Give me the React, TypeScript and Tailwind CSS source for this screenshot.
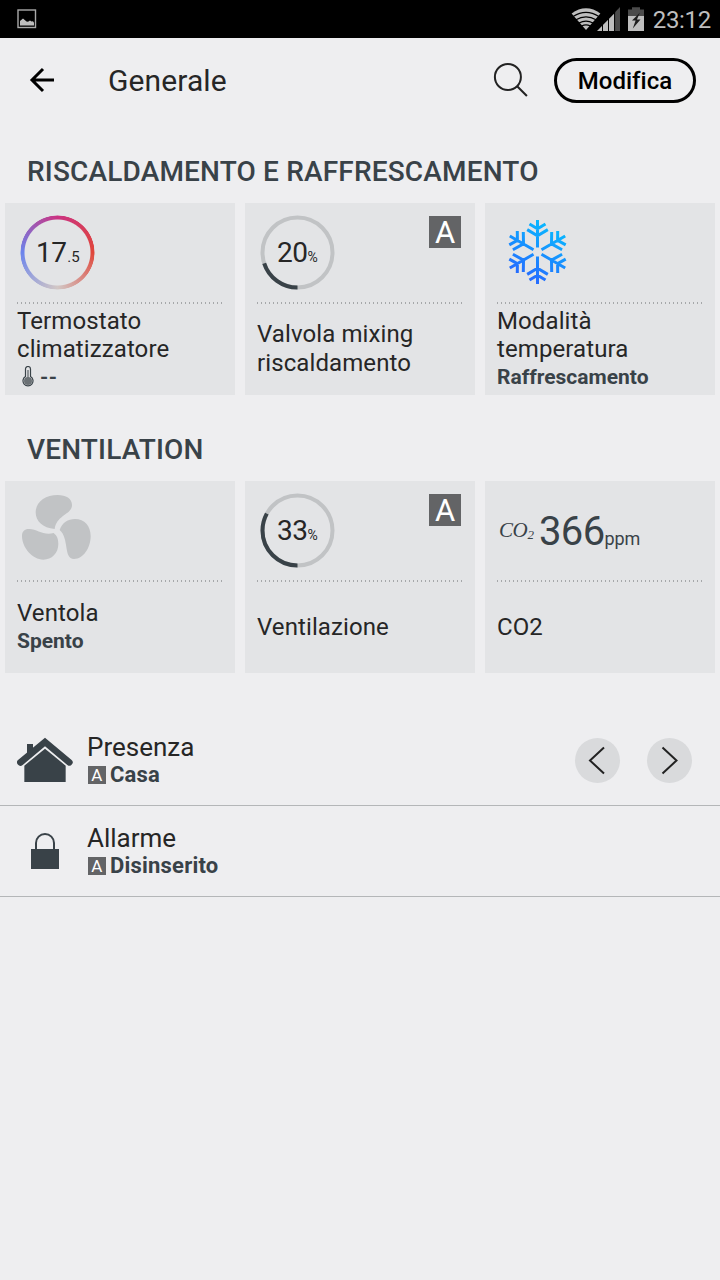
import type { ReactNode } from 'react';

interface TileProps {
  icon: ReactNode;
  title: string;
  status?: ReactNode;
  auto?: boolean;
}

function StatusBar() {
  return (
    <div className="flex h-[38px] items-center bg-black pl-[17px] pr-[9px] text-[#bebebe]">
      <svg width="20" height="20" viewBox="0 0 20 20" fill="none">
        <rect x="1" y="1" width="17.5" height="17.5" stroke="#a9a9a9" strokeWidth="1.4" />
        <path d="M3 16.5V12l3-2.6 3.5 3.2 1.5.2 2-1.2 1.5.9 1.5-.3 1 1.5v2.8z" fill="#bebebe" />
      </svg>
      <div className="flex-1" />
      <svg width="74" height="26" viewBox="571 5 74 26" fill="none">
        {/* wifi */}
        <path d="M586 29L571.6 12.5Q578.5 7.3 586 7.3T600.4 12.5Z" fill="#bebebe" />
        <path
          d="M573.5 15.2Q579.5 11.3 586 11.3T598.5 15.2M576 18.8Q580.8 15.8 586 15.8T596 18.8M579 22Q582.5 20.2 586 20.2T593 22M581.5 25Q584 23.8 586 23.8T590.5 25"
          stroke="#000"
          strokeWidth="1.2"
        />
        {/* mobile signal */}
        <path d="M597 30L614.5 12.2V30z" fill="#bebebe" />
        <path d="M615 30V11.2L620 6v24z" fill="#4b4b4b" />
        <path d="M602.5 22v9M608.5 16v15M614.6 10v21" stroke="#000" strokeWidth="1" />
        {/* battery */}
        <path d="M628 8.5h4V6.3h8v2.2h4V15h-16z" fill="#4b4b4b" />
        <path d="M628 15h16v15h-16z" fill="#bebebe" />
        <path d="M640 11.5L632 19.5h3.6L632.8 27.5L640.5 18.5h-3.6z" fill="#1d1d1d" />
      </svg>
      <span className="ml-2 pt-px text-[24px] leading-6 tracking-[-0.3px]">23:12</span>
    </div>
  );
}

function Header() {
  return (
    <header className="flex h-[84px] items-center pl-[29px] pr-6">
      <svg width="26" height="26" viewBox="0 0 26 26" fill="none" stroke="#000" strokeWidth="3">
        <path d="M25 13H3M14 2L3 13l11 11" />
      </svg>
      <h1 className="ml-[53px] flex-1 pt-[2px] text-[30px] leading-8 tracking-[0.1px] text-[#262626]">Generale</h1>
      <svg width="36" height="36" viewBox="-0.4 -1 36 36" fill="none" stroke="#222" strokeWidth="2">
        <circle cx="14.5" cy="14" r="13" />
        <path d="M23.5 23l10 10" />
      </svg>
      <button className="ml-[25px] h-[45px] w-[142px] rounded-full border-[3px] border-black pt-[2px] text-[24px] leading-6 font-medium tracking-[0.02px] text-black">
        Modifica
      </button>
    </header>
  );
}

// The value arc starts at the bottom and runs clockwise
function PercentDial({ value }: { value: number }) {
  return (
    <div className="relative flex h-[75px] w-[75px] items-baseline pl-[17px] pt-[21px] text-[#262626]">
      <svg className="absolute inset-0" width="75" height="75" viewBox="0 0 75 75" fill="none" strokeWidth="4">
        <circle cx="37.5" cy="37.5" r="35" stroke="#c1c3c5" />
        <circle
          cx="37.5"
          cy="37.5"
          r="35"
          stroke="#394248"
          pathLength="100"
          strokeDasharray={`${value} 100`}
          transform="rotate(90 37.5 37.5)"
        />
      </svg>
      <span className="text-[28px] leading-[34px] tracking-[-0.5px]">{value}</span>
      <span className="text-[14px]">%</span>
    </div>
  );
}

function ThermostatDial() {
  return (
    <div className="relative flex h-[75px] w-[75px] items-baseline pl-[16px] pt-[21px] text-[#262626]">
      <div className="absolute inset-0 rounded-full bg-[conic-gradient(#cb3382,#e0463a_25%,#d2c7c5_50%,#6b84ec_75%,#cb3382)] [mask:radial-gradient(circle,transparent_32.5px,black_33.5px,black_36.6px,transparent_37.4px)]" />
      <span className="text-[28px] leading-[34px] tracking-[-0.6px]">17</span>
      <span className="ml-px text-[15px]">.5</span>
    </div>
  );
}

function Snowflake() {
  return (
    <svg width="75" height="75" viewBox="-37.5 -37 75 75" fill="none" stroke="url(#ice)" strokeWidth="3">
      <defs>
        <linearGradient id="ice" gradientUnits="userSpaceOnUse" x1="13" y1="-27" x2="-12" y2="24">
          <stop offset="0" stopColor="#08b8ff" />
          <stop offset="1" stopColor="#256dff" />
        </linearGradient>
      </defs>
      <path d="M0-4.6V-32M-8-28L0-23.2L8-28M-10.3-22.4L0-16.2L10.3-22.4M0 4.6V32M-8 28L0 23.2L8 28M-10.3 22.4L0 16.2L10.3 22.4M4-2.3L27.7-16M20.2-20.9L20.1-11.6L28.2-7.1M14.2-20.1L14-8.1L24.6-2.3M-4-2.3L-27.7-16M-20.2-20.9L-20.1-11.6L-28.2-7.1M-14.2-20.1L-14-8.1L-24.6-2.3M4 2.3L27.7 16M20.2 20.9L20.1 11.6L28.2 7.1M14.2 20.1L14 8.1L24.6 2.3M-4 2.3L-27.7 16M-20.2 20.9L-20.1 11.6L-28.2 7.1M-14.2 20.1L-14 8.1L-24.6 2.3" />
    </svg>
  );
}

function Fan() {
  return (
    <svg width="74" height="68" viewBox="60 39 222 204" fill="#c1c3c5">
      <path d="M164 147C128 144 107 124 107 97C107 66 136 45 173 45C198 45 216 56 216 75C216 104 170 104 164 147Z" />
      <path d="M179 150C186 128 204 117 225 117C254 117 272 139 272 168C272 203 250 237 222 237C190 237 208 174 179 150Z" />
      <path d="M161 159C172 168 175 178 175 192C175 220 155 239 130 239C98 239 66 203 66 168C66 152 76 146 88 147C112 148 130 167 161 159Z" />
    </svg>
  );
}

function Co2Value() {
  return (
    <div className="flex items-baseline pt-[15px] text-[#394248]">
      <span className="relative -top-2 -left-px font-['Liberation_Serif',serif] text-[21px] tracking-[-0.4px] italic">
        CO
      </span>
      <span className="relative -top-[6px] -left-px font-['Liberation_Serif',serif] text-[13px] italic">2</span>
      <span className="ml-1 text-[40px] leading-[48px] tracking-[-0.6px]">366</span>
      <span className="text-[18px] tracking-[-0.1px]">ppm</span>
    </div>
  );
}

function Thermometer() {
  return (
    <svg width="12" height="21" viewBox="0 0 12 21" fill="none" stroke="#394248">
      <path d="M3.5 10.5V3a2.5 2.5 0 0 1 5 0v7.5a5 5 0 1 1-5 0z" strokeWidth="1.2" />
      <circle cx="6" cy="15" r="4" fill="#6b7175" stroke="none" />
      <path d="M6 4v9" stroke="#6b7175" strokeWidth="1.4" />
    </svg>
  );
}

function Tile({ icon, title, status, auto }: TileProps) {
  return (
    <div className="flex h-48 flex-col bg-[#e3e4e6]">
      <div className="flex h-[99px] items-start justify-between pl-[15px] pr-[14px] pt-3">
        {icon}
        {auto && (
          <span className="mt-[1.4px] flex h-8 w-8 items-center justify-center bg-[#636466] pt-[2px] text-[31px] leading-8 text-white">
            A
          </span>
        )}
      </div>
      <div className="ml-3 h-[2px] w-[206px] bg-[repeating-linear-gradient(90deg,#a6a8aa_0_1px,transparent_1px_4px)]" />
      <div
        className={`flex flex-1 flex-col justify-center px-3 text-[24px] text-[#262626] ${status ? 'pb-[2px] leading-7' : 'pb-px leading-[29px]'}`}
      >
        <span className="w-[170px] tracking-[0.1px]">{title}</span>
        {status && (
          <span className="flex items-center text-[21px] leading-7 font-bold text-[#394248]">{status}</span>
        )}
      </div>
    </div>
  );
}

function Section({ title, children }: { title: string; children: ReactNode }) {
  return (
    <section>
      <h2 className="flex h-16 items-center pt-[2px] pl-[27px] text-[28px] font-medium tracking-[0.17px] text-[#394248]">
        {title}
      </h2>
      <div className="grid grid-cols-3 gap-[10px] px-[5px]">{children}</div>
    </section>
  );
}

interface RowProps {
  icon: ReactNode;
  name: string;
  state: string;
  children?: ReactNode;
}

function Row({ icon, name, state, children }: RowProps) {
  return (
    <div className="flex h-[91px] items-center border-b border-[#b4b6b8] pr-[28.5px]">
      <div className="flex w-[90px] justify-center">{icon}</div>
      <div className="-ml-[3px] flex-1 pt-[2px]">
        <div className="text-[26px] leading-7 text-[#262626]">{name}</div>
        <div className="flex items-center text-[22px] leading-7 font-bold tracking-[0.2px] text-[#394248]">
          <span className="mr-1 ml-px flex h-[18px] w-[18px] items-center justify-center bg-[#636466] text-[17px] leading-[18px] font-normal text-white">
            A
          </span>
          {state}
        </div>
      </div>
      {children}
    </div>
  );
}

function House() {
  return (
    <svg width="56" height="46" viewBox="51 51 168 138" fill="#394248">
      <path d="M81 104V72H99V88Z" />
      <path d="M135 53L214 119A10 10 0 0 1 202 135L135 79L68 135A10 10 0 0 1 55 119Z" />
      <path d="M73 186V137L135 86L197 137V186Z" />
    </svg>
  );
}

function Lock() {
  return (
    <svg width="28" height="36" viewBox="0 0 28 36">
      <path d="M5 18V10a9 9 0 0 1 18 0v8" fill="none" stroke="#394248" strokeWidth="2" />
      <path d="M0 16h28v20H0z" fill="#394248" />
    </svg>
  );
}

function RoundButton({ path }: { path: string }) {
  return (
    <button className="h-[45px] w-[45px] rounded-full bg-[#d9dadc]">
      <svg width="45" height="45" viewBox="0 0 45 45" fill="none" stroke="#222" strokeWidth="2">
        <path d={path} />
      </svg>
    </button>
  );
}

export default function App() {
  return (
    <div className="min-h-screen w-[720px] bg-[#eeeef0] font-['Roboto',sans-serif]">
      <StatusBar />
      <Header />
      <main className="flex flex-col pt-[17px]">
        <Section title="RISCALDAMENTO E RAFFRESCAMENTO">
          <Tile
            icon={<ThermostatDial />}
            title="Termostato climatizzatore"
            status={
              <>
                <span className="mr-[6px] ml-[5px]">
                  <Thermometer />
                </span>
                <span className="tracking-[0.6px]">--</span>
              </>
            }
          />
          <Tile icon={<PercentDial value={20} />} title="Valvola mixing riscaldamento" auto />
          <Tile icon={<Snowflake />} title="Modalità temperatura" status="Raffrescamento" />
        </Section>
        <div className="h-[22px]" />
        <Section title="VENTILATION">
          <Tile icon={<Fan />} title="Ventola" status="Spento" />
          <Tile icon={<PercentDial value={33} />} title="Ventilazione" auto />
          <Tile icon={<Co2Value />} title="CO2" />
        </Section>
        <div className="mt-[42px]">
          <Row icon={<House />} name="Presenza" state="Casa">
            <div className="flex gap-[27px]">
              <RoundButton path="M29 9.5L15 22.5L29 35.5" />
              <RoundButton path="M15.5 9.5L29.5 22.5L15.5 35.5" />
            </div>
          </Row>
          <Row icon={<Lock />} name="Allarme" state="Disinserito" />
        </div>
      </main>
    </div>
  );
}
